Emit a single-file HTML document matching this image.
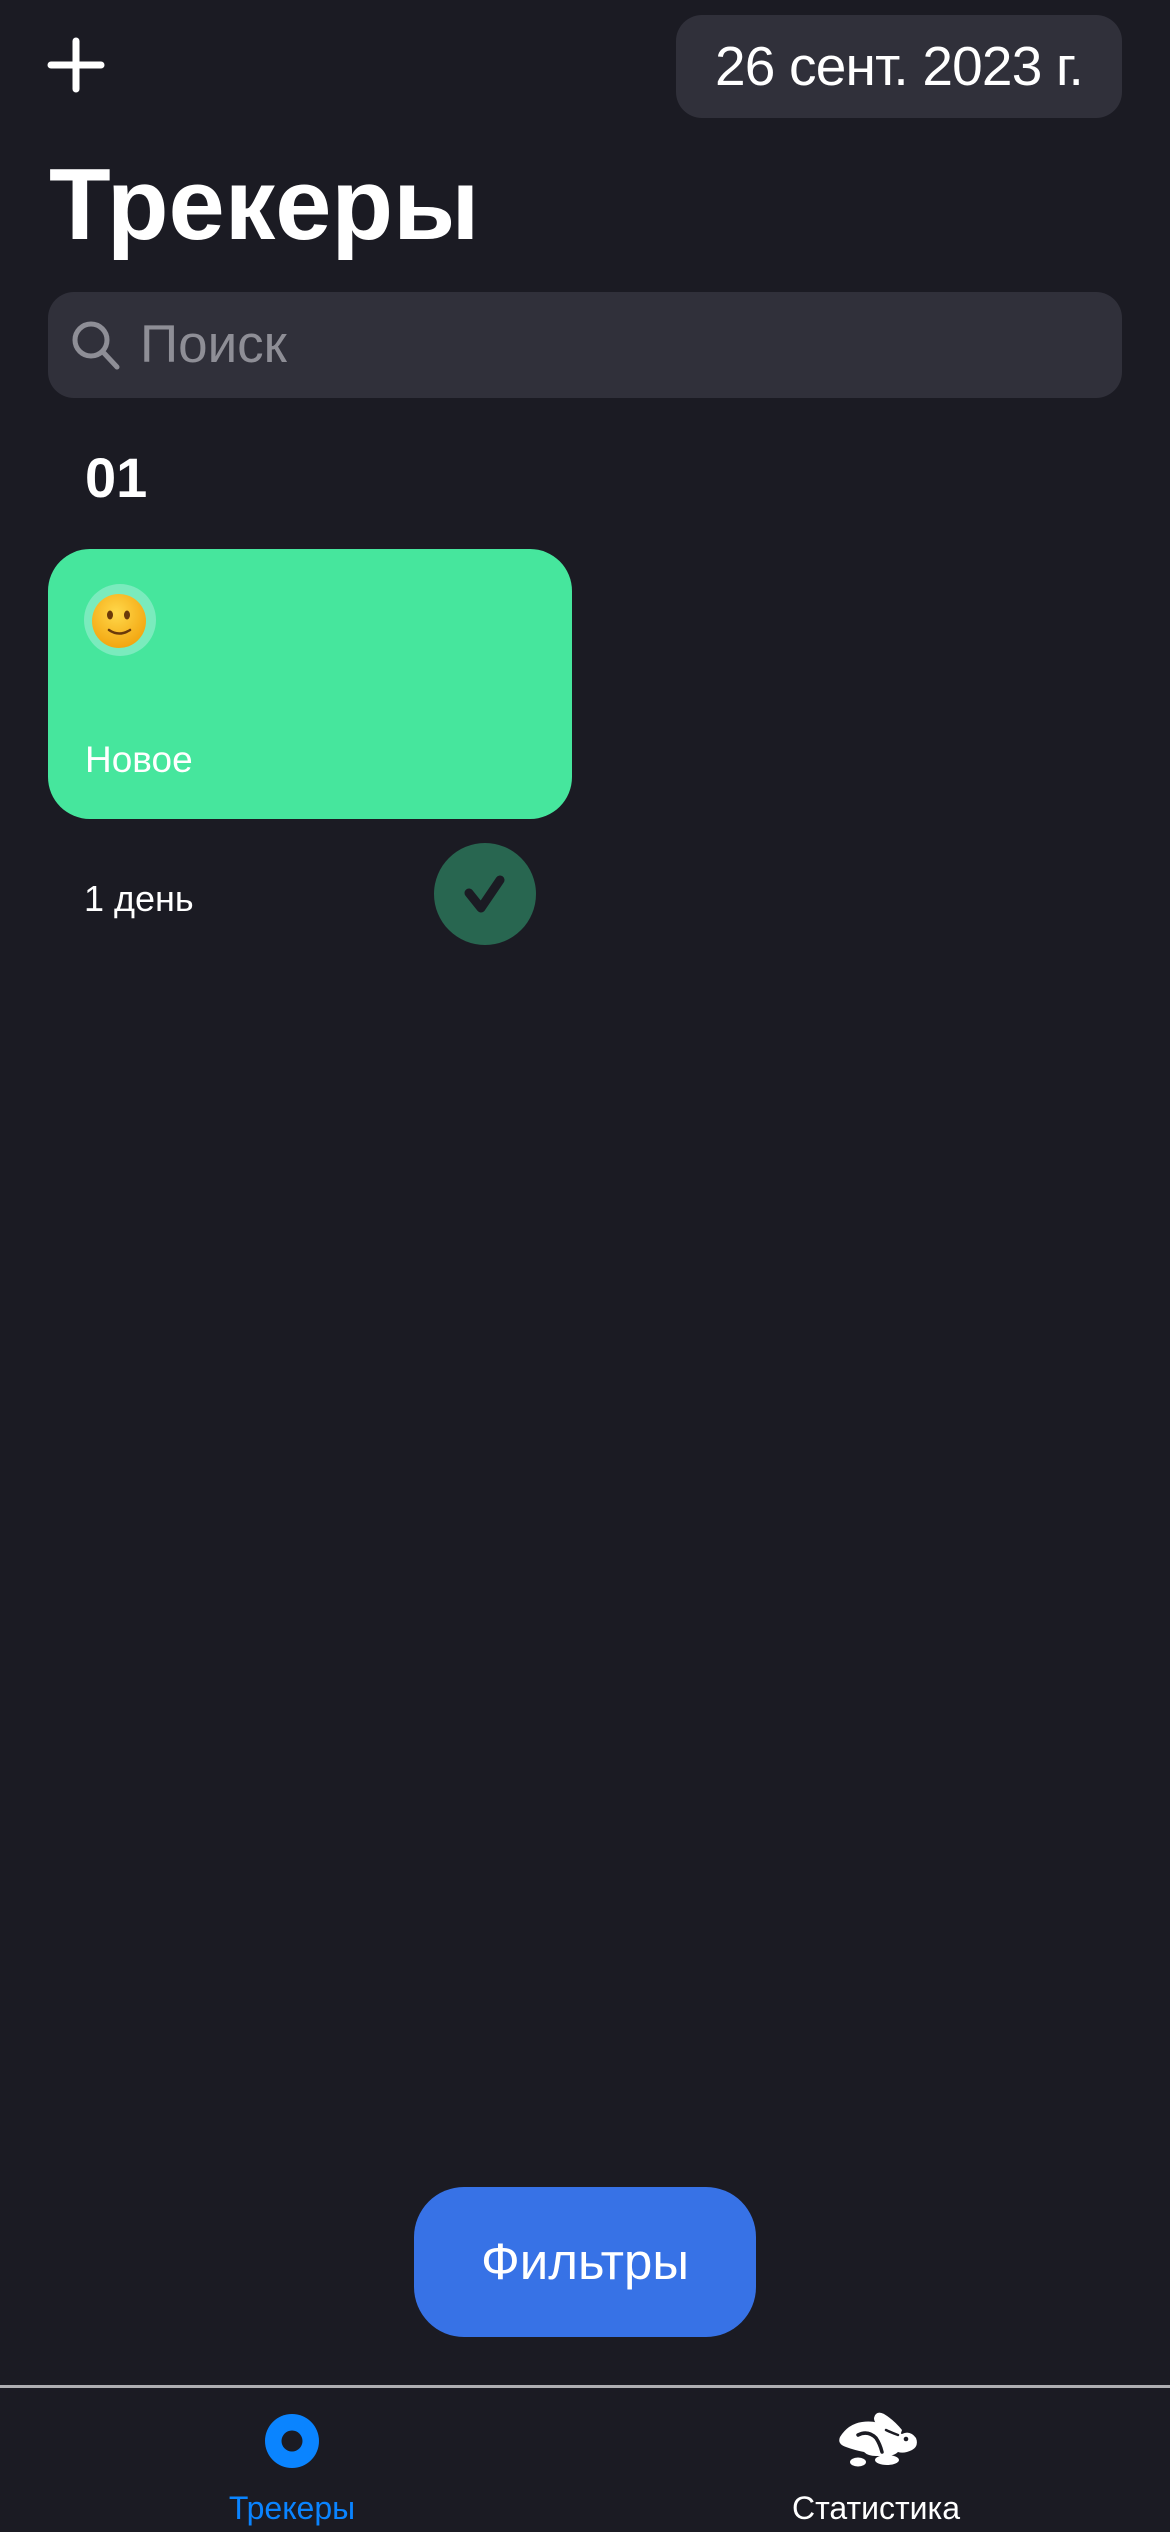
<!DOCTYPE html>
<html><head><meta charset="utf-8">
<style>
html,body{margin:0;padding:0;}
body{width:1170px;height:2532px;background:#1b1b23;position:relative;overflow:hidden;font-family:"Liberation Sans","Noto Sans CJK SC",sans-serif;color:#fff;}
.abs{position:absolute;}
</style></head><body>
<svg class="abs" style="left:0;top:0" width="1170" height="2532">
  <line x1="76" y1="41" x2="76" y2="89" stroke="#fff" stroke-width="7" stroke-linecap="round"/>
  <line x1="51" y1="65" x2="101" y2="65" stroke="#fff" stroke-width="7" stroke-linecap="round"/>
  <rect x="676" y="15" width="446" height="103" rx="26" fill="#30303a"/>
  <rect x="48" y="292" width="1074" height="106" rx="26" fill="#30303a"/>
  <circle cx="91" cy="340" r="16" fill="none" stroke="#8e8e96" stroke-width="5"/>
  <line x1="103" y1="352" x2="117" y2="367" stroke="#8e8e96" stroke-width="5" stroke-linecap="round"/>
  <rect x="48" y="549" width="524" height="270" rx="42" fill="#46e69d"/>
  <circle cx="120" cy="620" r="36" fill="#7aebbd"/>
  <defs><radialGradient id="fg" cx="45%" cy="35%" r="70%"><stop offset="0" stop-color="#ffd84a"/><stop offset="1" stop-color="#f2a20c"/></radialGradient></defs>
  <circle cx="119" cy="621" r="27" fill="url(#fg)"/>
  <ellipse cx="110" cy="615" rx="3" ry="4.5" fill="#6b3a0a"/>
  <ellipse cx="127" cy="615" rx="3" ry="4.5" fill="#6b3a0a"/>
  <path d="M109 630 Q119 637 130 630" fill="none" stroke="#6b3a0a" stroke-width="2.5" stroke-linecap="round"/>
  <circle cx="485" cy="894" r="51" fill="#286650"/>
  <path d="M469 893 L481 908 L500 880" fill="none" stroke="#1b1b23" stroke-width="9" stroke-linecap="round" stroke-linejoin="round"/>
  <rect x="414" y="2187" width="342" height="150" rx="50" fill="#3772e6"/>
  <rect x="0" y="2385" width="1170" height="3" fill="#aeaeb2"/>
  <circle cx="292" cy="2441" r="27" fill="#0a84ff"/>
  <circle cx="292" cy="2441" r="10.5" fill="#1b1b23"/>
  <g transform="translate(820,2390)" fill="#fff">
    <path d="M20 47 Q28 34 42 32 Q55 30 66 36 Q76 42 82 44 Q90 40 96 48 Q99 56 92 60 Q84 64 78 62 Q74 66 66 66 L56 66 Q48 66 44 62 Q34 60 26 57 Q17 54 20 47 Z"/>
    <path d="M54 28 Q56 20 64 24 Q74 30 82 40 L80 46 Q70 42 62 38 Q54 34 54 28 Z"/>
    <ellipse cx="38" cy="72" rx="8" ry="4.5"/>
    <ellipse cx="67" cy="70" rx="12" ry="5"/>
    <path d="M38 45 Q48 40 56 48 Q60 54 62 62" fill="none" stroke="#1b1b23" stroke-width="3.5" stroke-linecap="round"/>
    <path d="M66 40 Q72 43 78 45" fill="none" stroke="#1b1b23" stroke-width="2.5" stroke-linecap="round"/>
    <circle cx="86" cy="49" r="2.3" fill="#1b1b23"/>
  </g>
</svg>
<div class="abs" style="left:676px;top:15px;width:446px;height:103px;line-height:103px;text-align:center;font-size:55px;letter-spacing:-0.8px;">26 сент. 2023 г.</div>
<div class="abs" style="left:49px;top:150px;font-size:101px;font-weight:bold;line-height:110px;">Трекеры</div>
<div class="abs" style="left:140px;top:315px;font-size:53px;line-height:60px;color:#8e8e96;">Поиск</div>
<div class="abs" style="left:85px;top:448px;font-size:56px;font-weight:bold;line-height:60px;">01</div>
<div class="abs" style="left:85px;top:739px;font-size:37px;line-height:42px;">Новое</div>
<div class="abs" style="left:84px;top:878px;font-size:36px;line-height:42px;">1 день</div>
<div class="abs" style="left:414px;top:2187px;width:342px;height:150px;line-height:150px;text-align:center;font-size:51px;">Фильтры</div>
<div class="abs" style="left:192px;top:2489px;width:200px;text-align:center;font-size:32px;line-height:38px;color:#0a84ff;">Трекеры</div>
<div class="abs" style="left:736px;top:2489px;width:280px;text-align:center;font-size:32px;line-height:38px;">Статистика</div>
</body></html>
